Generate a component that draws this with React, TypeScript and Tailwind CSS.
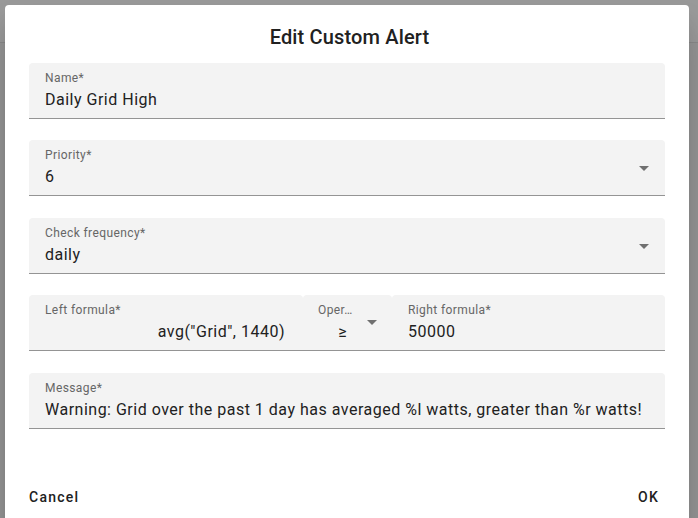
import React from "react";

const font = { fontFamily: "Roboto, 'Liberation Sans', sans-serif" };

function Arrow({ className }: { className: string }) {
  return (
    <svg viewBox="0 0 24 24" className={className} fill="rgba(0,0,0,0.54)">
      <path d="M7 10l5 5 5-5z" />
    </svg>
  );
}

function Field({
  label,
  value,
  select,
  className = "",
}: {
  label: string;
  value: string;
  select?: boolean;
  className?: string;
}) {
  return (
    <div className={"relative h-14 rounded-t bg-[#f3f3f3] border-b border-[#949494] px-4 pt-2 " + className}>
      <div className="text-[12px] leading-[14px] text-[#666666] tracking-[0.4px]">{label}</div>
      <div className="mt-[3px] text-[16px] leading-6 text-[#212121] tracking-[0.5px] whitespace-nowrap">{value}</div>
      {select && <Arrow className="absolute right-[9px] top-[16px] w-6 h-6" />}
    </div>
  );
}

export default function App() {
  return (
    <div
      className="relative w-[698px] h-[518px] overflow-hidden bg-[#969696]"
      style={font}
    >
      <div className="absolute left-0 top-0 w-full h-[43px] bg-[#9a9a9a] border-b border-[#8a8a8a]" />
      <div className="absolute left-[5px] top-[5px] w-[684px] h-[530px] bg-white rounded shadow-[0_11px_15px_-7px_rgba(0,0,0,0.2),0_24px_38px_3px_rgba(0,0,0,0.14)] flex flex-col">
        <div className="pl-[29px] pr-6 pt-4 pb-[10px] text-center text-[20px] leading-8 font-medium text-[#212121] tracking-[0.15px]">
          Edit Custom Alert
        </div>
        <div className="px-6 flex flex-col">
          <Field label="Name*" value="Daily Grid High" />
          <Field label="Priority*" value="6" select className="mt-[21px]" />
          <Field label="Check frequency*" value="daily" select className="mt-[22px]" />
          <div className="flex mt-[21px]">
            <div className="w-[274px] h-14 rounded-t bg-[#f3f3f3] border-b border-[#949494] pl-4 pr-[18px] pt-2">
              <div className="text-[12px] leading-[14px] text-[#666666] tracking-[0.4px]">Left formula*</div>
              <div className="mt-[3px] text-[16px] leading-6 text-[#212121] text-right tracking-[0.5px]">
                avg("Grid", 1440)
              </div>
            </div>
            <div className="relative w-[89px] h-14 rounded-t bg-[#f3f3f3] border-b border-[#949494] pl-[15px] pt-2">
              <div className="text-[12px] leading-[14px] text-[#666666] tracking-[0.4px]">Oper…</div>
              <div className="mt-[3px] w-[49px] text-center text-[16px] leading-6 text-[#212121]">≥</div>
              <Arrow className="absolute left-[57px] top-[15px] w-6 h-6" />
            </div>
            <div className="flex-1 h-14 rounded-t bg-[#f3f3f3] border-b border-[#949494] px-4 pt-2">
              <div className="text-[12px] leading-[14px] text-[#666666] tracking-[0.4px]">Right formula*</div>
              <div className="mt-[3px] text-[16px] leading-6 text-[#212121] tracking-[0.5px]">50000</div>
            </div>
          </div>
          <Field
            label="Message*"
            value="Warning: Grid over the past 1 day has averaged %l watts, greater than %r watts!"
            className="mt-[22px]"
          />
        </div>
        <div className="mt-[50px] flex justify-between pl-6 pr-[30px]">
          <button className="h-9 text-[14px] font-medium tracking-[1.25px] text-[#212121]">Cancel</button>
          <button className="h-9 text-[14px] font-medium tracking-[1.25px] text-[#212121]">OK</button>
        </div>
      </div>
    </div>
  );
}
